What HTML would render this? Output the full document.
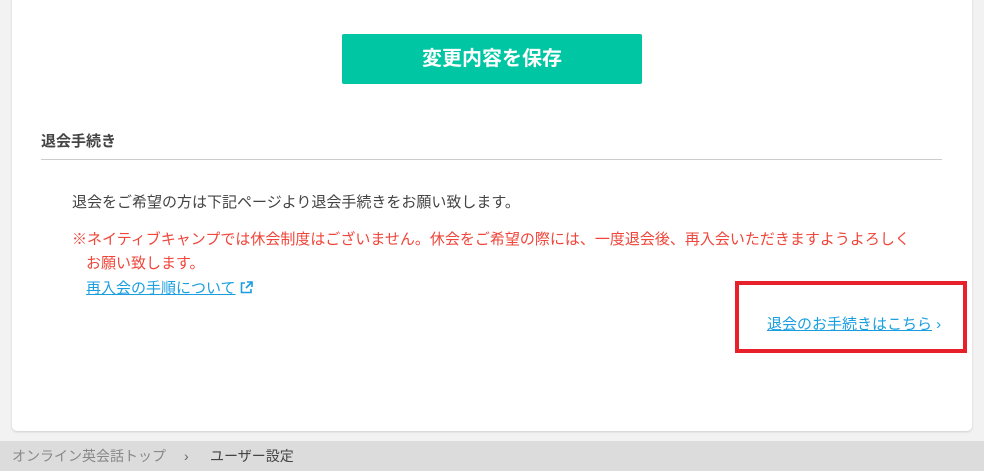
<!DOCTYPE html>
<html><head><meta charset="utf-8"><style>
body{margin:0;width:984px;height:471px;background:#f2f2f2;font-family:"Liberation Sans","Noto Sans CJK JP",sans-serif;position:relative;overflow:hidden;color:#444}
.card{position:absolute;left:12px;top:-10px;width:960px;height:441px;background:#fff;border-radius:5px;box-shadow:0 1px 2px rgba(0,0,0,.15)}
.btn{position:absolute;left:342px;top:34px;width:300px;height:50px;background:#00c6a4;color:#fff;font-size:20px;font-weight:bold;text-align:center;line-height:50px;border-radius:2px}
.h{position:absolute;left:41px;top:130px;font-size:15px;font-weight:bold;color:#444}
.hr{position:absolute;left:41px;top:159px;width:901px;height:1px;background:#ccc}
.t{position:absolute;font-size:15px;white-space:nowrap}
.red{color:#f0453a}
.a{color:#1a9ee0;text-decoration:underline}
.box{position:absolute;left:735px;top:281px;width:224px;height:64px;border:4px solid #e8202a}
.bc{position:absolute;left:0;top:441px;width:984px;height:30px;background:#dcdcdc;font-size:14px;line-height:30px}
</style></head><body>
<div class="card"></div>
<div class="btn">変更内容を保存</div>
<div class="h">退会手続き</div>
<div class="hr"></div>
<div class="t" style="left:72px;top:191px">退会をご希望の方は下記ページより退会手続きをお願い致します。</div>
<div class="t red" style="left:72px;top:228px">※ネイティブキャンプでは休会制度はございません。休会をご希望の際には、一度退会後、再入会いただきますようよろしく</div>
<div class="t red" style="left:86px;top:252px">お願い致します。</div>
<div class="t" style="left:86px;top:277px"><span class="a">再入会の手順について</span> <svg width="13" height="13" viewBox="0 0 13 13" style="vertical-align:-1px"><path d="M5 2H1.5v9.5H11V8" fill="none" stroke="#1a9ee0" stroke-width="1.6"/><path d="M7 1h5v5M12 1L6 7" fill="none" stroke="#1a9ee0" stroke-width="1.6"/></svg></div>
<div class="box"></div>
<div class="t" style="left:767px;top:313px"><span class="a">退会のお手続きはこちら</span><span style="color:#1a9ee0"> ›</span></div>
<div class="bc"><span style="position:absolute;left:12px;color:#888">オンライン英会話トップ</span><span style="position:absolute;left:184px;color:#666">›</span><span style="position:absolute;left:210px;color:#444">ユーザー設定</span></div>
</body></html>
